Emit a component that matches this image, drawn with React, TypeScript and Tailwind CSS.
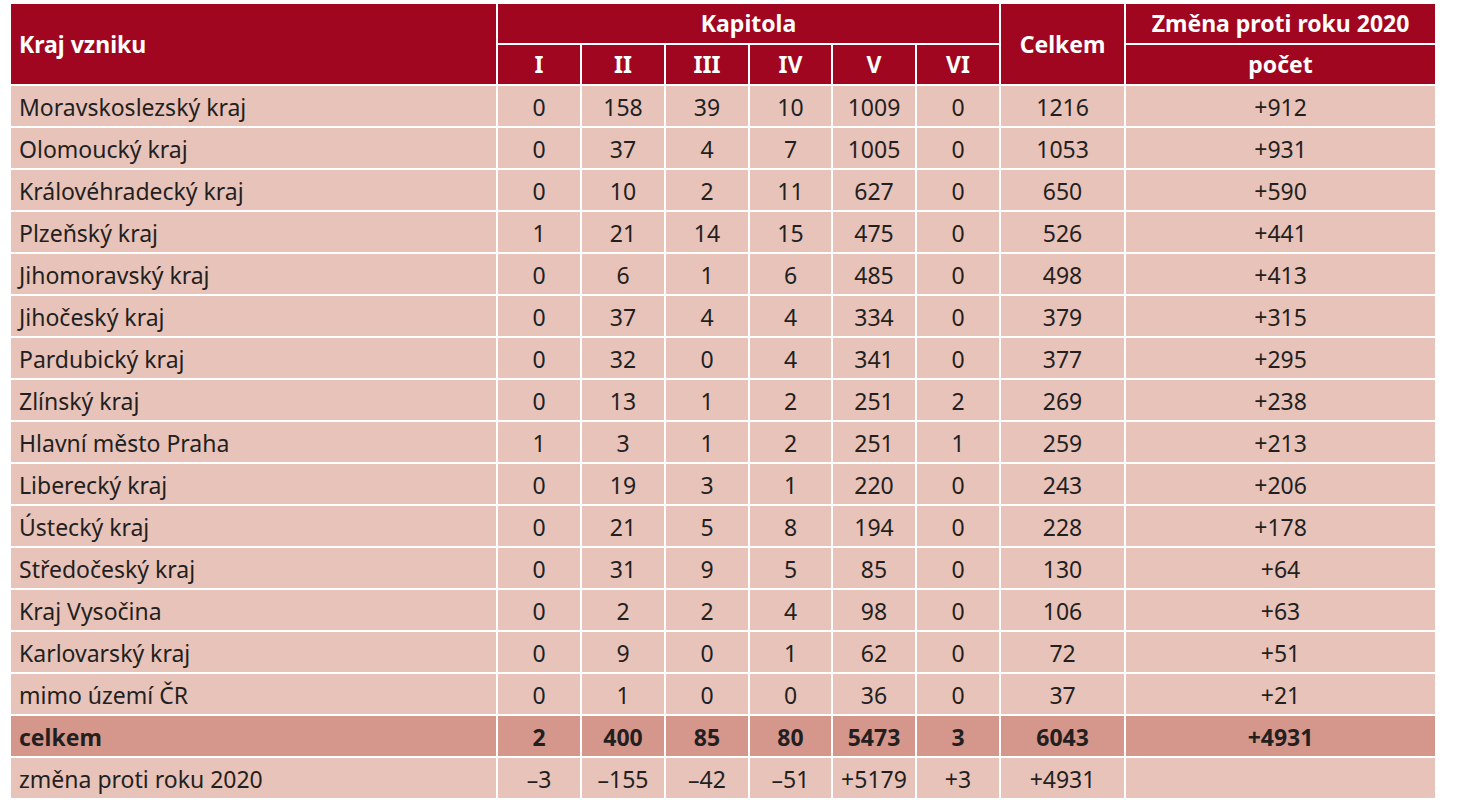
import React from "react";

const rows: [string, string[], string, string][] = [
  ["Moravskoslezský kraj", ["0", "158", "39", "10", "1009", "0"], "1216", "+912"],
  ["Olomoucký kraj", ["0", "37", "4", "7", "1005", "0"], "1053", "+931"],
  ["Královéhradecký kraj", ["0", "10", "2", "11", "627", "0"], "650", "+590"],
  ["Plzeňský kraj", ["1", "21", "14", "15", "475", "0"], "526", "+441"],
  ["Jihomoravský kraj", ["0", "6", "1", "6", "485", "0"], "498", "+413"],
  ["Jihočeský kraj", ["0", "37", "4", "4", "334", "0"], "379", "+315"],
  ["Pardubický kraj", ["0", "32", "0", "4", "341", "0"], "377", "+295"],
  ["Zlínský kraj", ["0", "13", "1", "2", "251", "2"], "269", "+238"],
  ["Hlavní město Praha", ["1", "3", "1", "2", "251", "1"], "259", "+213"],
  ["Liberecký kraj", ["0", "19", "3", "1", "220", "0"], "243", "+206"],
  ["Ústecký kraj", ["0", "21", "5", "8", "194", "0"], "228", "+178"],
  ["Středočeský kraj", ["0", "31", "9", "5", "85", "0"], "130", "+64"],
  ["Kraj Vysočina", ["0", "2", "2", "4", "98", "0"], "106", "+63"],
  ["Karlovarský kraj", ["0", "9", "0", "1", "62", "0"], "72", "+51"],
  ["mimo území ČR", ["0", "1", "0", "0", "36", "0"], "37", "+21"],
];

const cell = "border-2 border-white text-center pt-[3px] leading-none";
const first = "border-2 border-white pl-2 pt-[3px] leading-none";
const hcell = "border-2 border-white text-center font-bold leading-none";

export default function App() {
  return (
    <div className="bg-white w-[1478px] h-[800px] pl-[9px] pt-[2px]" style={{ fontFamily: '"Noto Sans", "Open Sans", sans-serif' }}>
      <table className="border-collapse table-fixed text-[23px] text-[#231f20]" style={{ width: 1426 }}>
        <colgroup>
          <col style={{ width: 487 }} />
          <col style={{ width: 84 }} />
          <col style={{ width: 84 }} />
          <col style={{ width: 84 }} />
          <col style={{ width: 83 }} />
          <col style={{ width: 84 }} />
          <col style={{ width: 84 }} />
          <col style={{ width: 125 }} />
          <col style={{ width: 311 }} />
        </colgroup>
        <thead className="bg-[#a0061f] text-white text-[23px]">
          <tr className="h-[41px]">
            <th rowSpan={2} className="border-2 border-white text-left pl-2 font-bold leading-none">Kraj vzniku</th>
            <th colSpan={6} className={hcell}>Kapitola</th>
            <th rowSpan={2} className={hcell}>Celkem</th>
            <th className={hcell}>Změna proti roku 2020</th>
          </tr>
          <tr className="h-[41px]">
            {["I", "II", "III", "IV", "V", "VI"].map((k) => (
              <th key={k} className={hcell}>{k}</th>
            ))}
            <th className={hcell}>počet</th>
          </tr>
        </thead>
        <tbody>
          {rows.map(([name, vals, tot, ch]) => (
            <tr key={name} className="h-[42px] bg-[#e8c3ba]">
              <td className={first}>{name}</td>
              {vals.map((v, i) => (
                <td key={i} className={cell}>{v}</td>
              ))}
              <td className={cell}>{tot}</td>
              <td className={cell}>{ch}</td>
            </tr>
          ))}
          <tr className="h-[42px] bg-[#d5968b] font-bold">
            <td className={first}>celkem</td>
            {["2", "400", "85", "80", "5473", "3"].map((v, i) => (
              <td key={i} className={cell}>{v}</td>
            ))}
            <td className={cell}>6043</td>
            <td className={cell}>+4931</td>
          </tr>
          <tr className="h-[42px] bg-[#e8c3ba]">
            <td className={first}>změna proti roku 2020</td>
            {["–3", "–155", "–42", "–51", "+5179", "+3"].map((v, i) => (
              <td key={i} className={cell}>{v}</td>
            ))}
            <td className={cell}>+4931</td>
            <td className={cell}></td>
          </tr>
        </tbody>
      </table>
    </div>
  );
}
